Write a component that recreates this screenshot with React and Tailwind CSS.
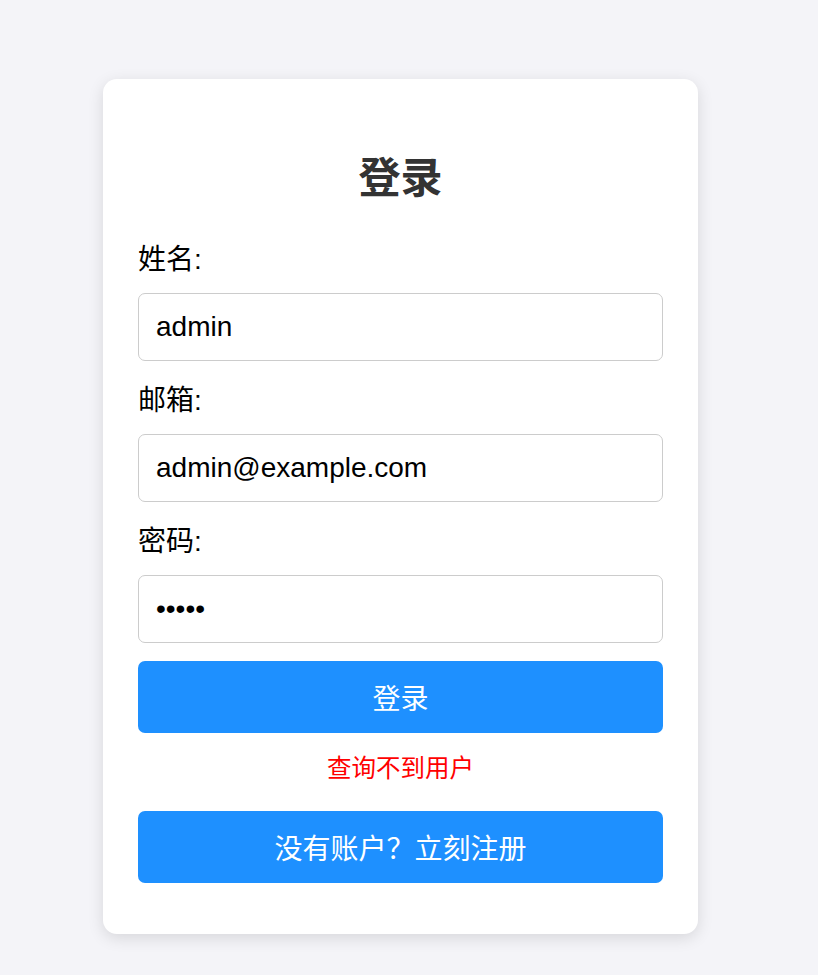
import React from "react";

const font = { fontFamily: '"Liberation Sans", "Noto Sans CJK SC", sans-serif' };

function Field({ label, type = "text", value, last }) {
  return (
    <div className="flex flex-col">
      <label className="pt-[2px] mb-[17px] text-[28px] leading-[32px] text-black">{label}</label>
      <input
        type={type}
        defaultValue={value}
        className={
          "h-[68px] w-full rounded-[7px] border border-[#cccccc] bg-white pl-[17px] pr-[17px] text-[28px] text-black outline-none " +
          (last ? "mb-[18px]" : "mb-[22px]")
        }
        style={font}
      />
    </div>
  );
}

export default function App() {
  return (
    <div className="min-h-[975px] w-full bg-[#f4f4f8]" style={font}>
      <div className="flex w-[801px] justify-center pt-[79px] pb-[40px]">
        <div className="flex w-[595px] flex-col rounded-[14px] bg-white px-[35px] pt-[75px] pb-[51px] shadow-[0_4px_16px_rgba(0,0,0,0.12)]">
          <h2 className="mb-[40px] pt-[1px] text-center text-[42px] font-bold leading-[47px] text-[#333333]">登录</h2>
          <Field label="姓名:" value="admin" />
          <Field label="邮箱:" value="admin@example.com" />
          <Field label="密码:" type="password" value="admin" last />
          <button className="h-[72px] w-full rounded-[7px] bg-[#1e90ff] pt-[6px] text-[28px] leading-[32px] text-white" style={font}>
            登录
          </button>
          <p className="mt-[22px] mb-[28px] text-center text-[24.5px] leading-[28px] text-[#ff0000]">查询不到用户</p>
          <button className="h-[72px] w-full rounded-[7px] bg-[#1e90ff] pt-[6px] text-[28px] leading-[32px] text-white" style={font}>
            没有账户？立刻注册
          </button>
        </div>
      </div>
    </div>
  );
}
